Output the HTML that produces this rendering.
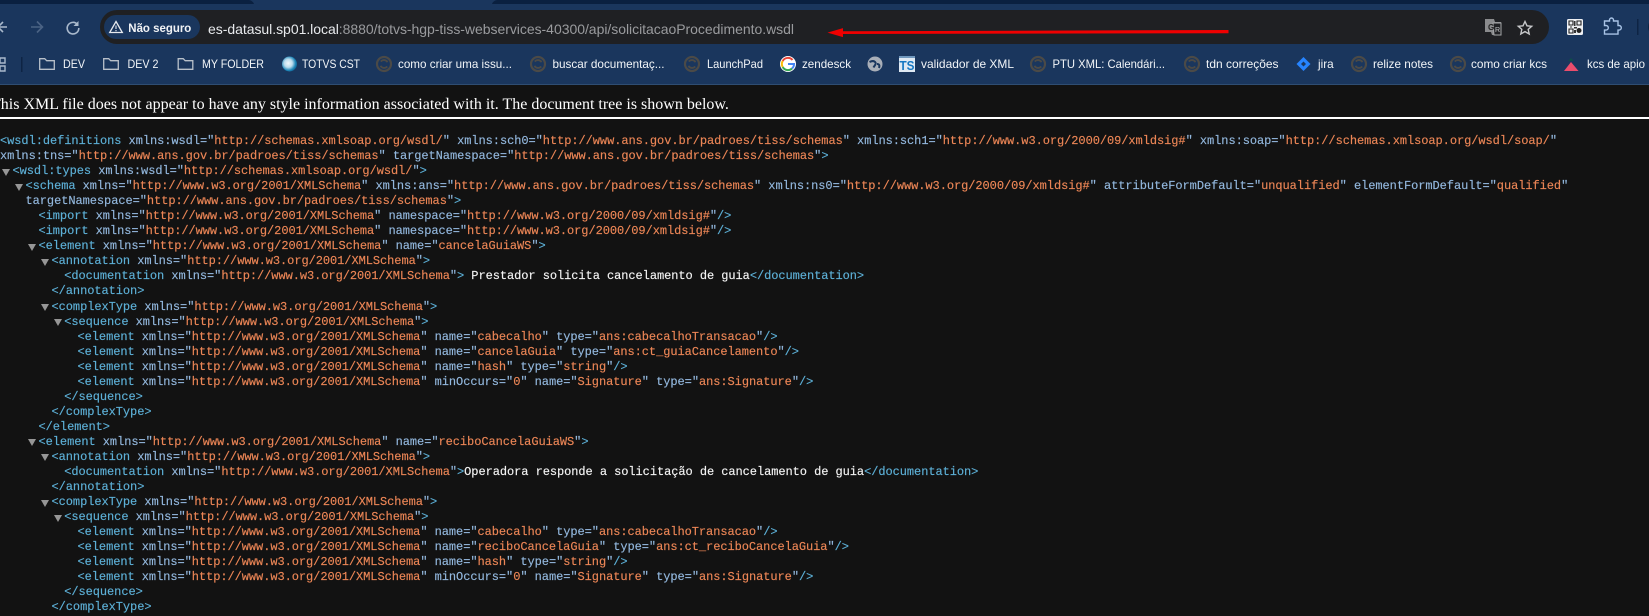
<!DOCTYPE html>
<html lang="pt-BR"><head><meta charset="utf-8"><title>solicitacaoProcedimento.wsdl</title>
<style>
html,body{margin:0;padding:0;width:1649px;height:616px;overflow:hidden;background:#121212}
svg.c{position:absolute;left:0;top:0;font-family:"Liberation Sans",sans-serif}
.h{position:absolute;left:-9px;top:96px;font:16px/18px "Liberation Serif",serif;color:#fff;white-space:pre}
.r{position:absolute;left:0;top:117px;width:1649px;height:2px;background:#fff}
.x{position:absolute;left:0;top:134px;width:1649px;font:12px/15px "Liberation Mono",monospace;letter-spacing:-.06px;color:#5db0d7;-webkit-text-stroke:.15px}
.x div{height:15.05px;white-space:pre;position:relative}
.x i{font-style:normal;color:#93b8de}
.x b{font-weight:normal;color:#ec8656}
.x u{text-decoration:none;color:#f4f4f4}
.l1{padding-left:12.5px}.l2{padding-left:25.5px}.l3{padding-left:38.5px}.l4{padding-left:51.5px}.l5{padding-left:64.2px}.l6{padding-left:77.5px}
.o:before{content:"";position:absolute;margin-left:-10.5px;top:4.500px;border-left:4.500px solid transparent;border-right:4.500px solid transparent;border-top:7px solid #969696}
</style></head><body>
<svg class="c" width="1649" height="85" viewBox="0 0 1649 85">
<rect width="1649" height="85" fill="#1a365d"/>
<rect width="1649" height="4" fill="#0a2040"/>
<path d="M248 0h250a6 6 0 0 0-6 4h-238a6 6 0 0 0-6-4z" fill="#1a365d"/>
<rect y="84" width="1649" height="1" fill="#2f4d72"/>
<path d="M7 27H-2M3 22l-5 5 5 5" fill="none" stroke="#a9b9cc" stroke-width="1.6"/>
<path d="M31 27h11M37 21.500l5.500 5.500-5.500 5.500" fill="none" stroke="#4b6384" stroke-width="1.6"/>
<path d="M77.500 24.500A5.800 5.800 0 1 0 78.800 28" fill="none" stroke="#a9b9cc" stroke-width="1.600"/><path d="M78.500 21v5h-5z" fill="#a9b9cc"/>
<rect x="100" y="10" width="1449" height="34" rx="17" fill="#1f2023"/>
<rect x="104" y="15" width="96" height="24" rx="12" fill="#1a365d"/>
<path d="M116 21.500l6.300 11h-12.600z" fill="none" stroke="#e6e9ee" stroke-width="1.300"/><path d="M116 25.500v3.500M116 30v1.200" stroke="#e6e9ee" stroke-width="1.100"/>
<text x="128.300" y="32" font-size="12" font-weight="700" fill="#f0f2f5" textLength="63" lengthAdjust="spacingAndGlyphs">Não seguro</text>
<text x="208" y="34" font-size="14" fill="#9a9b9e" textLength="586" lengthAdjust="spacing"><tspan fill="#e8eaed">es-datasul.sp01.local</tspan>:8880/totvs-hgp-tiss-webservices-40300/api/solicitacaoProcedimento.wsdl</text>
<path d="M843 31.300L1228.500 30v3.200L843 34z" fill="#f00000"/><path d="M827.500 32.600l15.500-4.500v9z" fill="#f00000"/>
<path d="M1485 19h9l1 3h6v13h-9l-1-3h-6z" fill="#8a8b8d"/><path d="M1493 23h8v12h-7z" fill="#202124" stroke="#a6a7a9"/>
<text x="1488" y="30" font-size="8" font-weight="700" fill="#222">G</text><text x="1495" y="32" font-size="7" fill="#c4c5c7">R</text>
<path d="M1525 21.500l2 4.300 4.700.5-3.500 3.100 1 4.600-4.200-2.400-4.200 2.400 1-4.600-3.500-3.100 4.700-.5z" fill="none" stroke="#c6c7c9" stroke-width="1.400"/>
<rect x="1567" y="19" width="16" height="16" rx="1.500" fill="#eef0f3"/>
<path d="M1569 21h4v4h-4zM1577 21h4v4h-4zM1569 29h4v4h-4z" fill="none" stroke="#222" stroke-width="1.100"/><path d="M1574 21h1.500v5H1574zM1574 27h3v1.500h-3zM1570 26.500h2v1h-2zM1574 30h2v3h-2z" fill="#333"/><circle cx="1579" cy="30.500" r="2.500" fill="#222"/>
<path d="M1604.500 21h5v-1a2 2 0 0 1 4 0v1h4.500v4.500h1a2.300 2.300 0 0 1 0 4.600h-1v4h-13.500v-4h1.500a2.300 2.300 0 0 0 0-4.600h-1.500z" fill="none" stroke="#a9c4e6" stroke-width="1.400"/>
<rect x="1637" y="19" width="1.500" height="16" fill="#0e2444"/>
<circle cx="1657" cy="27" r="9" fill="#0e2444"/>
<path d="M0 58h5v5H0zM0 66h5v5H0z" fill="none" stroke="#a9b9cc" stroke-width="1.400"/>
<rect x="21" y="57" width="1.500" height="15" fill="#0e2444"/>
<g fill="none" stroke="#b8c0ca" stroke-width="1.300">
<path d="M39.700 58.700h5l2 2h7.600v8.600H39.700z"/><path d="M103.700 58.700h5l2 2h7.600v8.600h-14.600z"/><path d="M178.200 58.700h5l2 2h7.600v8.600h-14.600z"/>
</g>
<g fill="#f2f5f8" font-size="12">
<text x="63" y="68" textLength="22" lengthAdjust="spacingAndGlyphs">DEV</text>
<text x="127.500" y="68" textLength="31" lengthAdjust="spacingAndGlyphs">DEV 2</text>
<text x="202" y="68" textLength="62" lengthAdjust="spacingAndGlyphs">MY FOLDER</text>
<text x="302" y="68" textLength="58" lengthAdjust="spacingAndGlyphs">TOTVS CST</text>
<text x="398" y="68" textLength="114" lengthAdjust="spacingAndGlyphs">como criar uma issu...</text>
<text x="552.500" y="68" textLength="112" lengthAdjust="spacingAndGlyphs">buscar documentaç...</text>
<text x="707" y="68" textLength="56" lengthAdjust="spacingAndGlyphs">LaunchPad</text>
<text x="802" y="68" textLength="49" lengthAdjust="spacingAndGlyphs">zendesck</text>
<text x="921" y="68" textLength="93" lengthAdjust="spacingAndGlyphs">validador de XML</text>
<text x="1052.500" y="68" textLength="112.500" lengthAdjust="spacingAndGlyphs">PTU XML: Calendári...</text>
<text x="1206" y="68" textLength="72.500" lengthAdjust="spacingAndGlyphs">tdn correções</text>
<text x="1318" y="68" textLength="15.600" lengthAdjust="spacingAndGlyphs">jira</text>
<text x="1373" y="68" textLength="60" lengthAdjust="spacingAndGlyphs">relize notes</text>
<text x="1471" y="68" textLength="76" lengthAdjust="spacingAndGlyphs">como criar kcs</text>
<text x="1587" y="68" textLength="58" lengthAdjust="spacingAndGlyphs">kcs de apio</text>
</g>
<defs><g id="s"><circle cx="8" cy="8" r="7" fill="none" stroke="#4b4a47" stroke-width="2.200"/><path d="M4.800 5.600A4 4 0 0 1 11.500 6.200M11.200 10.400A4 4 0 0 1 4.500 9.800" fill="none" stroke="#4b4a47" stroke-width="1.800"/></g>
<radialGradient id="tv" cx=".42" cy=".45" r=".6"><stop offset="0" stop-color="#f2f8fb"/><stop offset=".45" stop-color="#bcdcec"/><stop offset=".8" stop-color="#1d86b8"/><stop offset="1" stop-color="#0f5f8f"/></radialGradient></defs>
<use href="#s" x="376" y="56"/><use href="#s" x="530" y="56"/><use href="#s" x="684" y="56"/><use href="#s" x="1030" y="56"/><use href="#s" x="1184" y="56"/><use href="#s" x="1351" y="56"/><use href="#s" x="1450" y="56"/>
<circle cx="289.500" cy="64" r="7.500" fill="url(#tv)"/>
<circle cx="788" cy="64" r="8" fill="#fff"/>
<path d="M792.500 60a6 6 0 0 0-9.800 1" fill="none" stroke="#ea4335" stroke-width="2"/><path d="M782.700 61a6 6 0 0 0 0 6" fill="none" stroke="#fbbc05" stroke-width="2"/><path d="M782.700 67a6 6 0 0 0 9.300 1.500" fill="none" stroke="#34a853" stroke-width="2"/><path d="M792 68.500a6 6 0 0 0 2-4.500h-6" fill="none" stroke="#4285f4" stroke-width="2"/>
<circle cx="875" cy="64" r="7.500" fill="#a9afb8"/><path d="M869.500 62c3-1.500 5-1 6 0.500s-1 3-2 5M877 64c2 0 3 1 2 4" fill="none" stroke="#1a365d" stroke-width="2"/>
<rect x="899" y="56" width="16" height="16" fill="#dfe9f3"/><rect x="899" y="56" width="16" height="2" fill="#6f97bd"/>
<text x="899.500" y="70" font-size="13" font-weight="700" fill="#1577c2" textLength="15" lengthAdjust="spacingAndGlyphs">TS</text>
<path d="M1303.500 57l7 7-7 7-7-7z" fill="#2684ff"/><path d="M1303.500 61.500l2.500 2.500-2.500 2.500-2.500-2.500z" fill="#1a365d"/>
<path d="M1564 71l7-9 7.500 9z" fill="#ea4d6c"/><path d="M1568 61l3-3 3 3z" fill="#0f4d4a"/>
</svg>
<div class="h">This XML file does not appear to have any style information associated with it. The document tree is shown below.</div>
<div class="r"></div>
<div class="x">
<div>&lt;wsdl:definitions <i>xmlns:wsdl="</i><b>http://schemas.xmlsoap.org/wsdl/</b><i>"</i> <i>xmlns:sch0="</i><b>http://www.ans.gov.br/padroes/tiss/schemas</b><i>"</i> <i>xmlns:sch1="</i><b>http://www.w3.org/2000/09/xmldsig#</b><i>"</i> <i>xmlns:soap="</i><b>http://schemas.xmlsoap.org/wsdl/soap/</b><i>"</i></div>
<div><i>xmlns:tns="</i><b>http://www.ans.gov.br/padroes/tiss/schemas</b><i>"</i> <i>targetNamespace="</i><b>http://www.ans.gov.br/padroes/tiss/schemas</b><i>"</i>&gt;</div>
<div class="l1 o">&lt;wsdl:types <i>xmlns:wsdl="</i><b>http://schemas.xmlsoap.org/wsdl/</b><i>"</i>&gt;</div>
<div class="l2 o">&lt;schema <i>xmlns="</i><b>http://www.w3.org/2001/XMLSchema</b><i>"</i> <i>xmlns:ans="</i><b>http://www.ans.gov.br/padroes/tiss/schemas</b><i>"</i> <i>xmlns:ns0="</i><b>http://www.w3.org/2000/09/xmldsig#</b><i>"</i> <i>attributeFormDefault="</i><b>unqualified</b><i>"</i> <i>elementFormDefault="</i><b>qualified</b><i>"</i></div>
<div class="l2"><i>targetNamespace="</i><b>http://www.ans.gov.br/padroes/tiss/schemas</b><i>"</i>&gt;</div>
<div class="l3">&lt;import <i>xmlns="</i><b>http://www.w3.org/2001/XMLSchema</b><i>"</i> <i>namespace="</i><b>http://www.w3.org/2000/09/xmldsig#</b><i>"</i>/&gt;</div>
<div class="l3">&lt;import <i>xmlns="</i><b>http://www.w3.org/2001/XMLSchema</b><i>"</i> <i>namespace="</i><b>http://www.w3.org/2000/09/xmldsig#</b><i>"</i>/&gt;</div>
<div class="l3 o">&lt;element <i>xmlns="</i><b>http://www.w3.org/2001/XMLSchema</b><i>"</i> <i>name="</i><b>cancelaGuiaWS</b><i>"</i>&gt;</div>
<div class="l4 o">&lt;annotation <i>xmlns="</i><b>http://www.w3.org/2001/XMLSchema</b><i>"</i>&gt;</div>
<div class="l5">&lt;documentation <i>xmlns="</i><b>http://www.w3.org/2001/XMLSchema</b><i>"</i>&gt;<u> Prestador solicita cancelamento de guia</u>&lt;/documentation&gt;</div>
<div class="l4">&lt;/annotation&gt;</div>
<div class="l4 o">&lt;complexType <i>xmlns="</i><b>http://www.w3.org/2001/XMLSchema</b><i>"</i>&gt;</div>
<div class="l5 o">&lt;sequence <i>xmlns="</i><b>http://www.w3.org/2001/XMLSchema</b><i>"</i>&gt;</div>
<div class="l6">&lt;element <i>xmlns="</i><b>http://www.w3.org/2001/XMLSchema</b><i>"</i> <i>name="</i><b>cabecalho</b><i>"</i> <i>type="</i><b>ans:cabecalhoTransacao</b><i>"</i>/&gt;</div>
<div class="l6">&lt;element <i>xmlns="</i><b>http://www.w3.org/2001/XMLSchema</b><i>"</i> <i>name="</i><b>cancelaGuia</b><i>"</i> <i>type="</i><b>ans:ct_guiaCancelamento</b><i>"</i>/&gt;</div>
<div class="l6">&lt;element <i>xmlns="</i><b>http://www.w3.org/2001/XMLSchema</b><i>"</i> <i>name="</i><b>hash</b><i>"</i> <i>type="</i><b>string</b><i>"</i>/&gt;</div>
<div class="l6">&lt;element <i>xmlns="</i><b>http://www.w3.org/2001/XMLSchema</b><i>"</i> <i>minOccurs="</i><b>0</b><i>"</i> <i>name="</i><b>Signature</b><i>"</i> <i>type="</i><b>ans:Signature</b><i>"</i>/&gt;</div>
<div class="l5">&lt;/sequence&gt;</div>
<div class="l4">&lt;/complexType&gt;</div>
<div class="l3">&lt;/element&gt;</div>
<div class="l3 o">&lt;element <i>xmlns="</i><b>http://www.w3.org/2001/XMLSchema</b><i>"</i> <i>name="</i><b>reciboCancelaGuiaWS</b><i>"</i>&gt;</div>
<div class="l4 o">&lt;annotation <i>xmlns="</i><b>http://www.w3.org/2001/XMLSchema</b><i>"</i>&gt;</div>
<div class="l5">&lt;documentation <i>xmlns="</i><b>http://www.w3.org/2001/XMLSchema</b><i>"</i>&gt;<u>Operadora responde a solicitação de cancelamento de guia</u>&lt;/documentation&gt;</div>
<div class="l4">&lt;/annotation&gt;</div>
<div class="l4 o">&lt;complexType <i>xmlns="</i><b>http://www.w3.org/2001/XMLSchema</b><i>"</i>&gt;</div>
<div class="l5 o">&lt;sequence <i>xmlns="</i><b>http://www.w3.org/2001/XMLSchema</b><i>"</i>&gt;</div>
<div class="l6">&lt;element <i>xmlns="</i><b>http://www.w3.org/2001/XMLSchema</b><i>"</i> <i>name="</i><b>cabecalho</b><i>"</i> <i>type="</i><b>ans:cabecalhoTransacao</b><i>"</i>/&gt;</div>
<div class="l6">&lt;element <i>xmlns="</i><b>http://www.w3.org/2001/XMLSchema</b><i>"</i> <i>name="</i><b>reciboCancelaGuia</b><i>"</i> <i>type="</i><b>ans:ct_reciboCancelaGuia</b><i>"</i>/&gt;</div>
<div class="l6">&lt;element <i>xmlns="</i><b>http://www.w3.org/2001/XMLSchema</b><i>"</i> <i>name="</i><b>hash</b><i>"</i> <i>type="</i><b>string</b><i>"</i>/&gt;</div>
<div class="l6">&lt;element <i>xmlns="</i><b>http://www.w3.org/2001/XMLSchema</b><i>"</i> <i>minOccurs="</i><b>0</b><i>"</i> <i>name="</i><b>Signature</b><i>"</i> <i>type="</i><b>ans:Signature</b><i>"</i>/&gt;</div>
<div class="l5">&lt;/sequence&gt;</div>
<div class="l4">&lt;/complexType&gt;</div>
</div>
</body></html>
